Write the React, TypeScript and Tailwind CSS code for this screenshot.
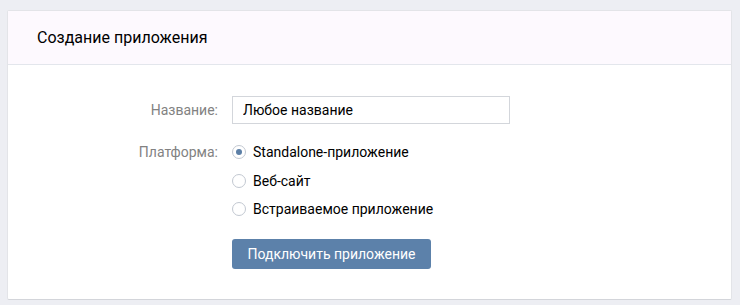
import { useState } from 'react'

const PLATFORMS = ['Standalone-приложение', 'Веб-сайт', 'Встраиваемое приложение']

function Radio({ checked }: { checked: boolean }) {
  return (
    <span className="flex h-[14px] w-[14px] shrink-0 items-center justify-center rounded-full border border-[#c2c8d1] bg-white">
      {checked && <span className="h-[6px] w-[6px] rounded-full bg-[#5c7fa6]" />}
    </span>
  )
}

export default function App() {
  const [platform, setPlatform] = useState(0)
  const [name, setName] = useState('Любое название')

  return (
    <div
      className="min-h-[305px] bg-[#edeef3] pl-[7px] pr-[8px] pt-[10px] pb-[6px]"
      style={{ fontFamily: 'Roboto, "Open Sans", Arial, sans-serif' }}
    >
      <div className="rounded-[2px] border border-[#e3e4e8] border-b-[#d3d5da] bg-white">
        {/* Header */}
        <div className="flex h-[54px] items-center border-b border-[#e3e6ec] bg-[#fdf9fe] pl-[29px]">
          <h2 className="text-[16px] text-black">Создание приложения</h2>
        </div>

        {/* Form */}
        <div className="pb-[30px] pt-[31px] text-[14px]">
          <div className="flex items-center">
            <label className="w-[210px] text-right text-[#828282]">Название:</label>
            <input
              value={name}
              onChange={(e) => setName(e.target.value)}
              className="ml-[14px] h-[28px] w-[278px] border border-[#d3d6db] px-[10px] text-[14px] text-black outline-none"
            />
          </div>

          <div className="mt-[20px] flex">
            <div className="w-[210px] text-right leading-[16px] text-[#828282]">Платформа:</div>
            <div className="ml-[14px] flex flex-col gap-[12.5px]">
              {PLATFORMS.map((p, i) => (
                <button
                  key={p}
                  onClick={() => setPlatform(i)}
                  className="flex items-center gap-[7px] leading-[16px] text-black"
                >
                  <Radio checked={platform === i} />
                  <span>{p}</span>
                </button>
              ))}
            </div>
          </div>

          <div className="ml-[224px] mt-[22px]">
            <button className="h-[30px] w-[199px] rounded-[3px] bg-[#5c81aa] text-[14px] text-white">
              Подключить приложение
            </button>
          </div>
        </div>
      </div>
    </div>
  )
}
